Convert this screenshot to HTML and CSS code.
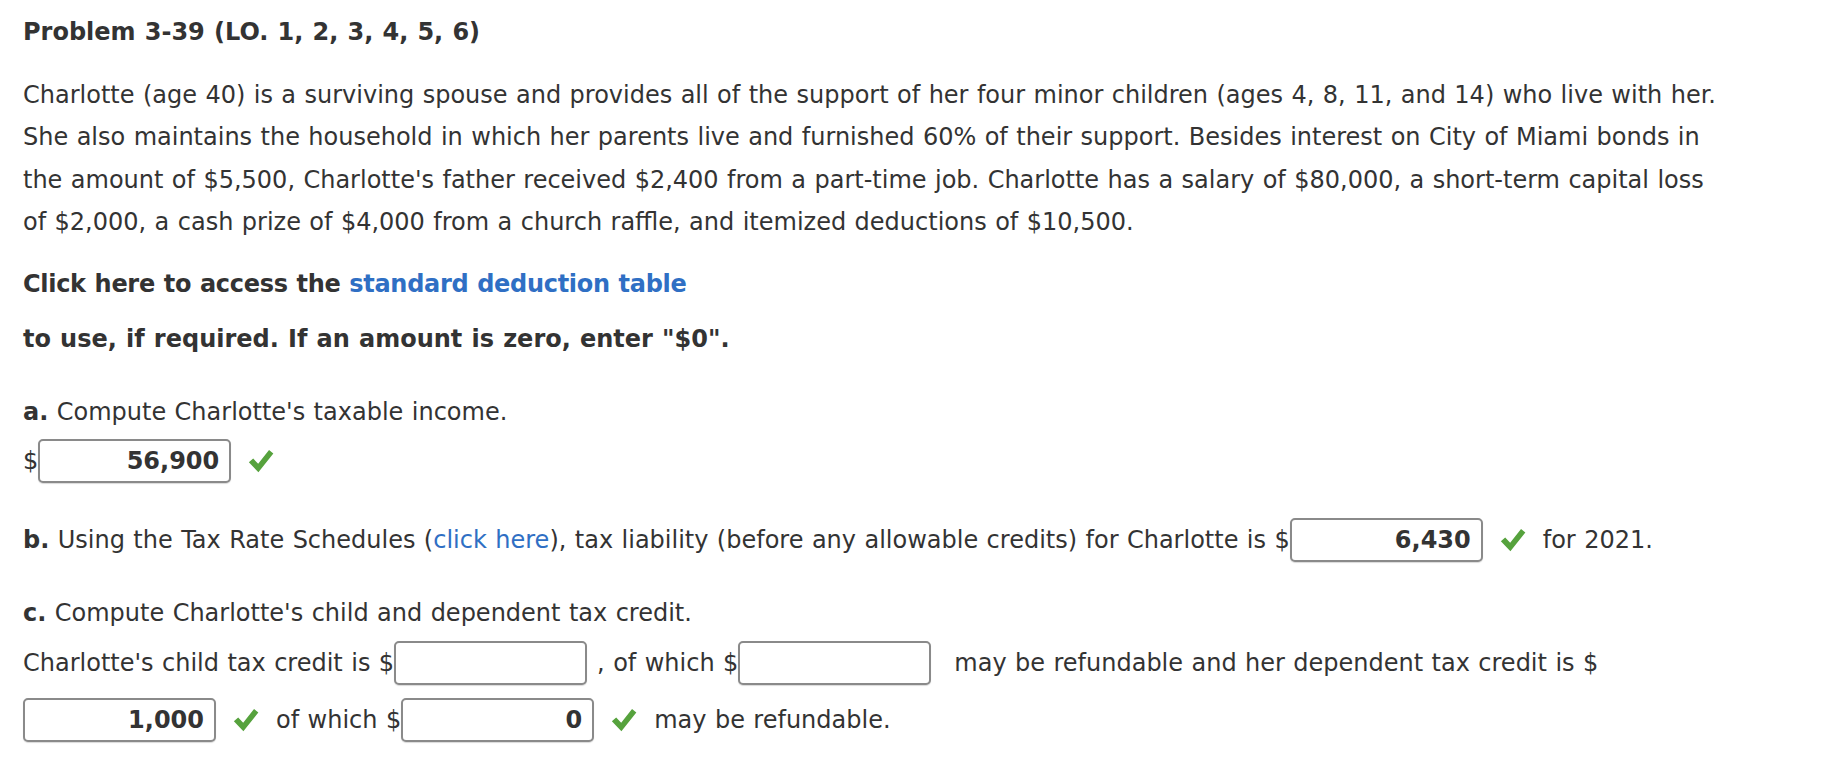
FILE: index.html
```html
<!DOCTYPE html>
<html>
<head>
<meta charset="utf-8">
<title>Problem 3-39</title>
<link rel="stylesheet" href="styles.css">
</head>
<body>
<div class="page">
  <div class="title">Problem 3-39 (LO. 1, 2, 3, 4, 5, 6)</div>
  <p class="para">Charlotte (age 40) is a surviving spouse and provides all of the support of her four minor children (ages 4, 8, 11, and 14) who live with her.<br>She also maintains the household in which her parents live and furnished 60% of their support. Besides interest on City of Miami bonds in<br>the amount of $5,500, Charlotte's father received $2,400 from a part-time job. Charlotte has a salary of $80,000, a short-term capital loss<br>of $2,000, a cash prize of $4,000 from a church raffle, and itemized deductions of $10,500.</p>
  <div class="note note-first">Click here to access the <a class="link" href="#">standard deduction table</a></div>
  <div class="note note-second">to use, if required. If an amount is zero, enter "$0".</div>

  <div class="q"><b>a.</b> Compute Charlotte's taxable income.</div>
  <div class="row row-a">
    <span>$</span><input class="box" type="text" value="56,900" readonly>
    <svg class="check" viewBox="0 0 24 24"><path d="M0.8 13.2 L4.8 9.8 L9.4 14.6 L19.4 1.8 L23.4 5 L9.6 22.4 Z"/></svg>
  </div>

  <div class="row row-b">
    <span><b>b.</b> Using the Tax Rate Schedules (<a class="plain-link" href="#">click here</a>), tax liability (before any allowable credits) for Charlotte is $</span><input class="box" type="text" value="6,430" readonly>
    <svg class="check" viewBox="0 0 24 24"><path d="M0.8 13.2 L4.8 9.8 L9.4 14.6 L19.4 1.8 L23.4 5 L9.6 22.4 Z"/></svg>
    <span>for 2021.</span>
  </div>

  <div class="q q-c"><b>c.</b> Compute Charlotte's child and dependent tax credit.</div>
  <div class="row row-c1">
    <span>Charlotte's child tax credit is $</span><input class="box" type="text" value="" readonly>
    <span class="comma">, of which $</span><input class="box" type="text" value="" readonly>
    <span class="after-blank">may be refundable and her dependent tax credit is $</span>
  </div>
  <div class="row row-c2">
    <input class="box" type="text" value="1,000" readonly>
    <svg class="check" viewBox="0 0 24 24"><path d="M0.8 13.2 L4.8 9.8 L9.4 14.6 L19.4 1.8 L23.4 5 L9.6 22.4 Z"/></svg>
    <span>of which $</span><input class="box" type="text" value="0" readonly>
    <svg class="check" viewBox="0 0 24 24"><path d="M0.8 13.2 L4.8 9.8 L9.4 14.6 L19.4 1.8 L23.4 5 L9.6 22.4 Z"/></svg>
    <span>may be refundable.</span>
  </div>
</div>
</body>
</html>
```

FILE: styles.css
```css
html, body {
  margin: 0;
  padding: 0;
  background: #ffffff;
}

body {
  font-family: "DejaVu Sans", Verdana, sans-serif;
  font-size: 24px;
  word-spacing: 0.8px;
  color: #333333;
}

.page {
  padding: 11px 23px;
}

.title {
  font-weight: bold;
  line-height: 42px;
  margin: 0 0 21px;
}

.para {
  line-height: 42.4px;
  margin: 0 0 19px;
  white-space: nowrap;
}

.note {
  font-weight: bold;
  line-height: 42px;
}

.note-first {
  margin-bottom: 13px;
  letter-spacing: -0.3px;
}

.note-second {
  margin-bottom: 31px;
}

.link {
  color: #2f6fc4;
  text-decoration: none;
  font-weight: bold;
}

.plain-link {
  color: #2f6fc4;
  text-decoration: none;
}

.q {
  line-height: 42px;
}

.q-c {
  margin-top: 30px;
}

.row {
  display: flex;
  align-items: center;
  height: 44px;
  white-space: nowrap;
}

.row-a {
  margin-top: 6px;
}

.row-b {
  margin-top: 35px;
}

.row-c1 {
  margin-top: 7px;
}

.row-c2 {
  margin-top: 13px;
}

.box {
  box-sizing: border-box;
  width: 193px;
  height: 44px;
  border: 2px solid #8a8a8a;
  border-radius: 5px;
  padding: 0 10px;
  margin: 0;
  font-family: "DejaVu Sans", Verdana, sans-serif;
  font-size: 24px;
  font-weight: bold;
  color: #333333;
  text-align: right;
  background: #ffffff;
  outline: none;
  box-shadow: 0 1px 1px rgba(0, 0, 0, 0.15);
}

.check {
  width: 26px;
  height: 26px;
  margin: 0 17px;
  flex: none;
}

.check path {
  fill: #56a23d;
}

.comma {
  margin-left: 10px;
}

.after-blank {
  margin-left: 23px;
}
```
